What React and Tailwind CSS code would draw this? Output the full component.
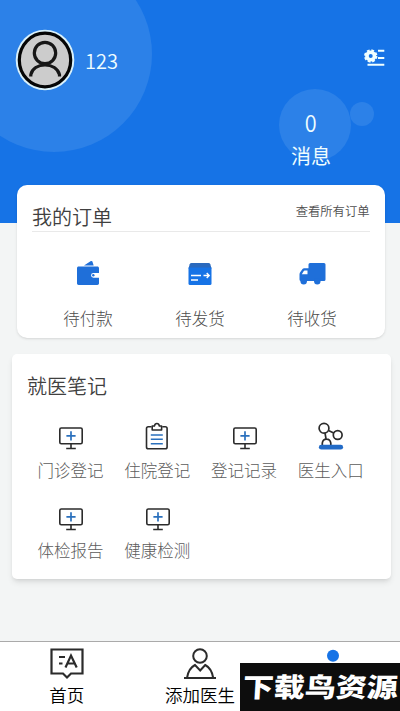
import React from 'react'

function WalletIcon() {
  return (
    <svg width="24" height="26" viewBox="0 0 24 26" fill="#1f6fd9">
      <path d="M8 5.500 14.500 1.200c.9-.5 1.700-.2 2 .6l1.200 3.700z" />
      <path
        fillRule="evenodd"
        d="M2.700 6.500h18.600c1 0 1.700.7 1.700 1.700v4.800h-5.600a2.300 2.300 0 0 0 0 4.700H23v5.600c0 1-.7 1.700-1.700 1.700H2.700c-1 0-1.700-.7-1.700-1.700V8.200c0-1 .7-1.700 1.700-1.700z"
      />
      <circle cx="17.300" cy="15.300" r="1.200" />
    </svg>
  )
}

function BoxIcon() {
  return (
    <svg width="24" height="26" viewBox="0 0 24 26" fill="#1673e6">
      <path d="M.5 8.500 1.700 4.300Q2.100 3 3.500 3h17q1.400 0 1.800 1.300L23.500 8.500z" fill="#2a69bd" />
      <path d="M.5 7.500h23v16q0 1.500-1.500 1.500H2q-1.500 0-1.500-1.500z" />
      <path d="M3 15.500h10M3 20h7M15.500 15.500h5.500M18.700 13l2.500 2.500-2.500 2.500" fill="none" stroke="#fff" strokeWidth="1.400" />
    </svg>
  )
}

function TruckIcon() {
  return (
    <svg width="27" height="25" viewBox="0 0 27 25" fill="#1f6fd9" className="mt-[2px]">
      <path
        fillRule="evenodd"
        d="M9.500 2.500q0-1.500 1.500-1.500h14q1.500 0 1.500 1.500v15q0 1.500-1.500 1.500H2q-1.500 0-1.500-1.500V12.500q0-1 .5-2L3.500 7q.6-.8 1.600-.8h4.400zM8.500 8.500H5.700q-.6 0-.9.500L2.800 12.300h5.700z"
      />
      <circle cx="4.700" cy="19.300" r="3.200" />
      <circle cx="18.300" cy="19.300" r="3.200" />
    </svg>
  )
}

function MonitorIcon() {
  return (
    <svg width="26" height="28" viewBox="0 0 26 28" fill="none" stroke="#2b2b2b" strokeWidth="1.600">
      <rect x="2.800" y="6" width="22.400" height="15.800" rx="1.500" />
      <path d="M14 22v4.500M9.200 26.500h9.600" />
      <path d="M14 9.300v9.200M9.400 13.900h9.200" stroke="#2a70bd" strokeWidth="1.700" />
    </svg>
  )
}

function ClipboardIcon() {
  return (
    <svg width="26" height="28" viewBox="0 0 26 28" fill="none" stroke="#2b2b2b" strokeWidth="1.600">
      <path d="M7.500 4.700H4.300q-1.800 0-1.800 1.800v18.500q0 1.800 1.800 1.800h17q1.800 0 1.800-1.800V6.500q0-1.800-1.800-1.800h-3" />
      <path d="M8.200 8V4h2.200q.5-2.500 2.500-2.500t2.500 2.500h2.200v4z" strokeLinejoin="round" />
      <path d="M6.800 13h12M6.800 17.300h12M6.800 21.700h12" stroke="#2a70bd" strokeWidth="1.400" />
    </svg>
  )
}

function MoleculeIcon() {
  return (
    <svg width="26" height="28" viewBox="0 0 26 28" fill="none" stroke="#2b2b2b" strokeWidth="1.700">
      <circle cx="6" cy="6.300" r="4.900" />
      <circle cx="19.700" cy="13" r="4.400" />
      <path d="M10.500 8.500l5.200 2.500M7 11.200l1 5.500M4.300 23v-1.800q.5-4 4.200-4t4.300 4v1.800" />
      <path d="M3.300 25.200h19.400" stroke="#226bc7" strokeWidth="4.800" strokeLinecap="round" />
    </svg>
  )
}

function GearListIcon() {
  return (
    <svg width="21" height="18" viewBox="0 0 21 18" fill="none" stroke="#f0ffff">
      <circle cx="6.700" cy="7" r="3.800" strokeWidth="3.600" />
      <circle cx="6.700" cy="7" r="5.700" strokeWidth="2" strokeDasharray="2.700 1.777" />
      <path d="M14 1.800H20.300M14 9H20.300M3.500 15.800H20.300" strokeWidth="2" />
    </svg>
  )
}

function Avatar() {
  return (
    <svg width="60" height="62" viewBox="0 0 60 62" fill="none" className="block">
      <ellipse cx="30" cy="31" rx="29.300" ry="30.300" fill="#d9f1fb" />
      <ellipse cx="30" cy="31" rx="25.700" ry="26.800" fill="#ccc" stroke="#050505" strokeWidth="3.200" />
      <circle cx="30" cy="24" r="10.700" stroke="#161616" strokeWidth="3.200" />
      <path d="M15.800 47.500v-1.800C17 39.500 23 36 30 36s13 3.500 14.500 9.700v1.800" stroke="#161616" strokeWidth="3.200" />
    </svg>
  )
}

const orders = [
  { label: '待付款', icon: <WalletIcon /> },
  { label: '待发货', icon: <BoxIcon /> },
  { label: '待收货', icon: <TruckIcon /> },
]

const notes = [
  { label: '门诊登记', icon: <MonitorIcon /> },
  { label: '住院登记', icon: <ClipboardIcon /> },
  { label: '登记记录', icon: <MonitorIcon /> },
  { label: '医生入口', icon: <MoleculeIcon /> },
  { label: '体检报告', icon: <MonitorIcon /> },
  { label: '健康检测', icon: <MonitorIcon /> },
]

function Header() {
  return (
    <header className="relative h-[223px] overflow-hidden bg-[#1673e6] text-[#effdff]">
      <div className="absolute -left-[44px] -top-[44px] size-[196px] rounded-full bg-[#2c81e8]" />
      <div className="absolute left-[279px] top-[89px] size-[72px] rounded-full bg-[#2c81e8]" />
      <div className="absolute left-[350px] top-[102px] size-[24px] rounded-full bg-[#2c81e8]" />
      <div className="relative flex items-center pl-[15px] pr-[15px] pt-[29px]">
        <Avatar />
        <span className="ml-[10px] mt-[2px] text-[20px] font-[350] leading-6">123</span>
        <button type="button" className="mb-[5px] ml-auto">
          <GearListIcon />
        </button>
      </div>
      <div className="relative ml-[271px] mt-[15px] flex w-20 flex-col items-center">
        <span className="scale-x-90 text-[24px] font-[350] leading-8">0</span>
        <span className="mt-[2px] text-[20px] leading-8">消息</span>
      </div>
    </header>
  )
}

function Orders() {
  return (
    <section className="relative ml-[17px] mr-[15.500px] -mt-[38px] h-[153px] rounded-[10px] bg-white px-[15px] shadow-sm">
      <div className="flex h-[47px] justify-between border-b border-[#e9e9e9]">
        <h2 className="mt-[16px] text-[20px] font-[350] leading-8 text-[#404040]">我的订单</h2>
        <a className="mt-[16px] text-[12.300px] font-[350] leading-5 text-[#505050]">查看所有订单</a>
      </div>
      <div className="mr-[1.500px] grid grid-cols-3">
        {orders.map((item) => (
          <div key={item.label} className="flex flex-col items-center pt-[28px]">
            <div className="flex h-[27px] items-start">{item.icon}</div>
            <span className="mt-[19px] text-[16.500px] font-light leading-6 text-[#4c4c4c]">{item.label}</span>
          </div>
        ))}
      </div>
    </section>
  )
}

function Notes() {
  return (
    <section className="ml-[12px] mr-[9.500px] mt-[16px] h-[225px] rounded-[5px] bg-white shadow-md">
      <h2 className="pl-[15px] pt-[16px] text-[20px] font-[350] leading-8 text-[#404040]">就医笔记</h2>
      <div className="ml-[15px] mt-[20px] grid w-[347px] grid-cols-4">
        {notes.map((item) => (
          <div key={item.label} className="flex h-[80.500px] flex-col items-center">
            {item.icon}
            <span className="mt-[7.500px] text-[16.500px] font-light leading-6 text-[#5c5c5c]">{item.label}</span>
          </div>
        ))}
      </div>
    </section>
  )
}

function TabBar() {
  return (
    <nav className="relative grid h-[70px] grid-cols-3 border-t border-[#aaa] bg-white text-[17.500px] font-[350] leading-6 text-black">
      <div className="flex flex-col items-center pt-[5px]">
        <svg width="34" height="34" viewBox="0 0 34 34" fill="none" stroke="#2b2b2b" strokeWidth="2.200">
          <path d="M1.500 2.500h31v24H21l-4 4-4-4H1.500z" />
          <path d="M15.500 20.500 21 8.500l5.700 12M17.500 16.500h7.300M9 10h6M9 16.500h3.500" />
        </svg>
        <span className="mt-[2px]">首页</span>
      </div>
      <div className="flex flex-col items-center pt-[5px]">
        <svg width="34" height="34" viewBox="0 0 34 34" fill="none" stroke="#2b2b2b" strokeWidth="2">
          <circle cx="17" cy="9" r="6.800" />
          <path d="M1 31h32M4 31c1-6.500 3.500-10.700 8-13l5.200 5.500 5-5.500c4.500 2.300 7 6.500 8 13" />
        </svg>
        <span className="mt-[2px]">添加医生</span>
      </div>
      <div className="flex flex-col items-center pt-[5px]">
        <svg width="34" height="34" viewBox="0 0 34 34" fill="#1673e6">
          <circle cx="17" cy="8.700" r="6" />
          <path d="M4 31q0-14 13-14t13 14z" />
        </svg>
        <span className="mt-[2px]">我的</span>
      </div>
      <div className="absolute left-[240px] top-[21px] flex h-[48px] w-[160px] items-center justify-center overflow-hidden bg-[#0d0d0d]">
        <span className="mb-[3px] -skew-x-3 scale-y-[0.86] whitespace-nowrap text-[31px] font-black leading-none text-white">
          下载鸟资源
        </span>
      </div>
    </nav>
  )
}

export default function App() {
  return (
    <div className="flex h-[711px] w-[400px] flex-col overflow-hidden bg-[#f3f5f5] font-['Noto_Sans_CJK_SC','Noto_Sans',sans-serif]">
      <Header />
      <Orders />
      <Notes />
      <div className="mt-auto">
        <TabBar />
      </div>
    </div>
  )
}
